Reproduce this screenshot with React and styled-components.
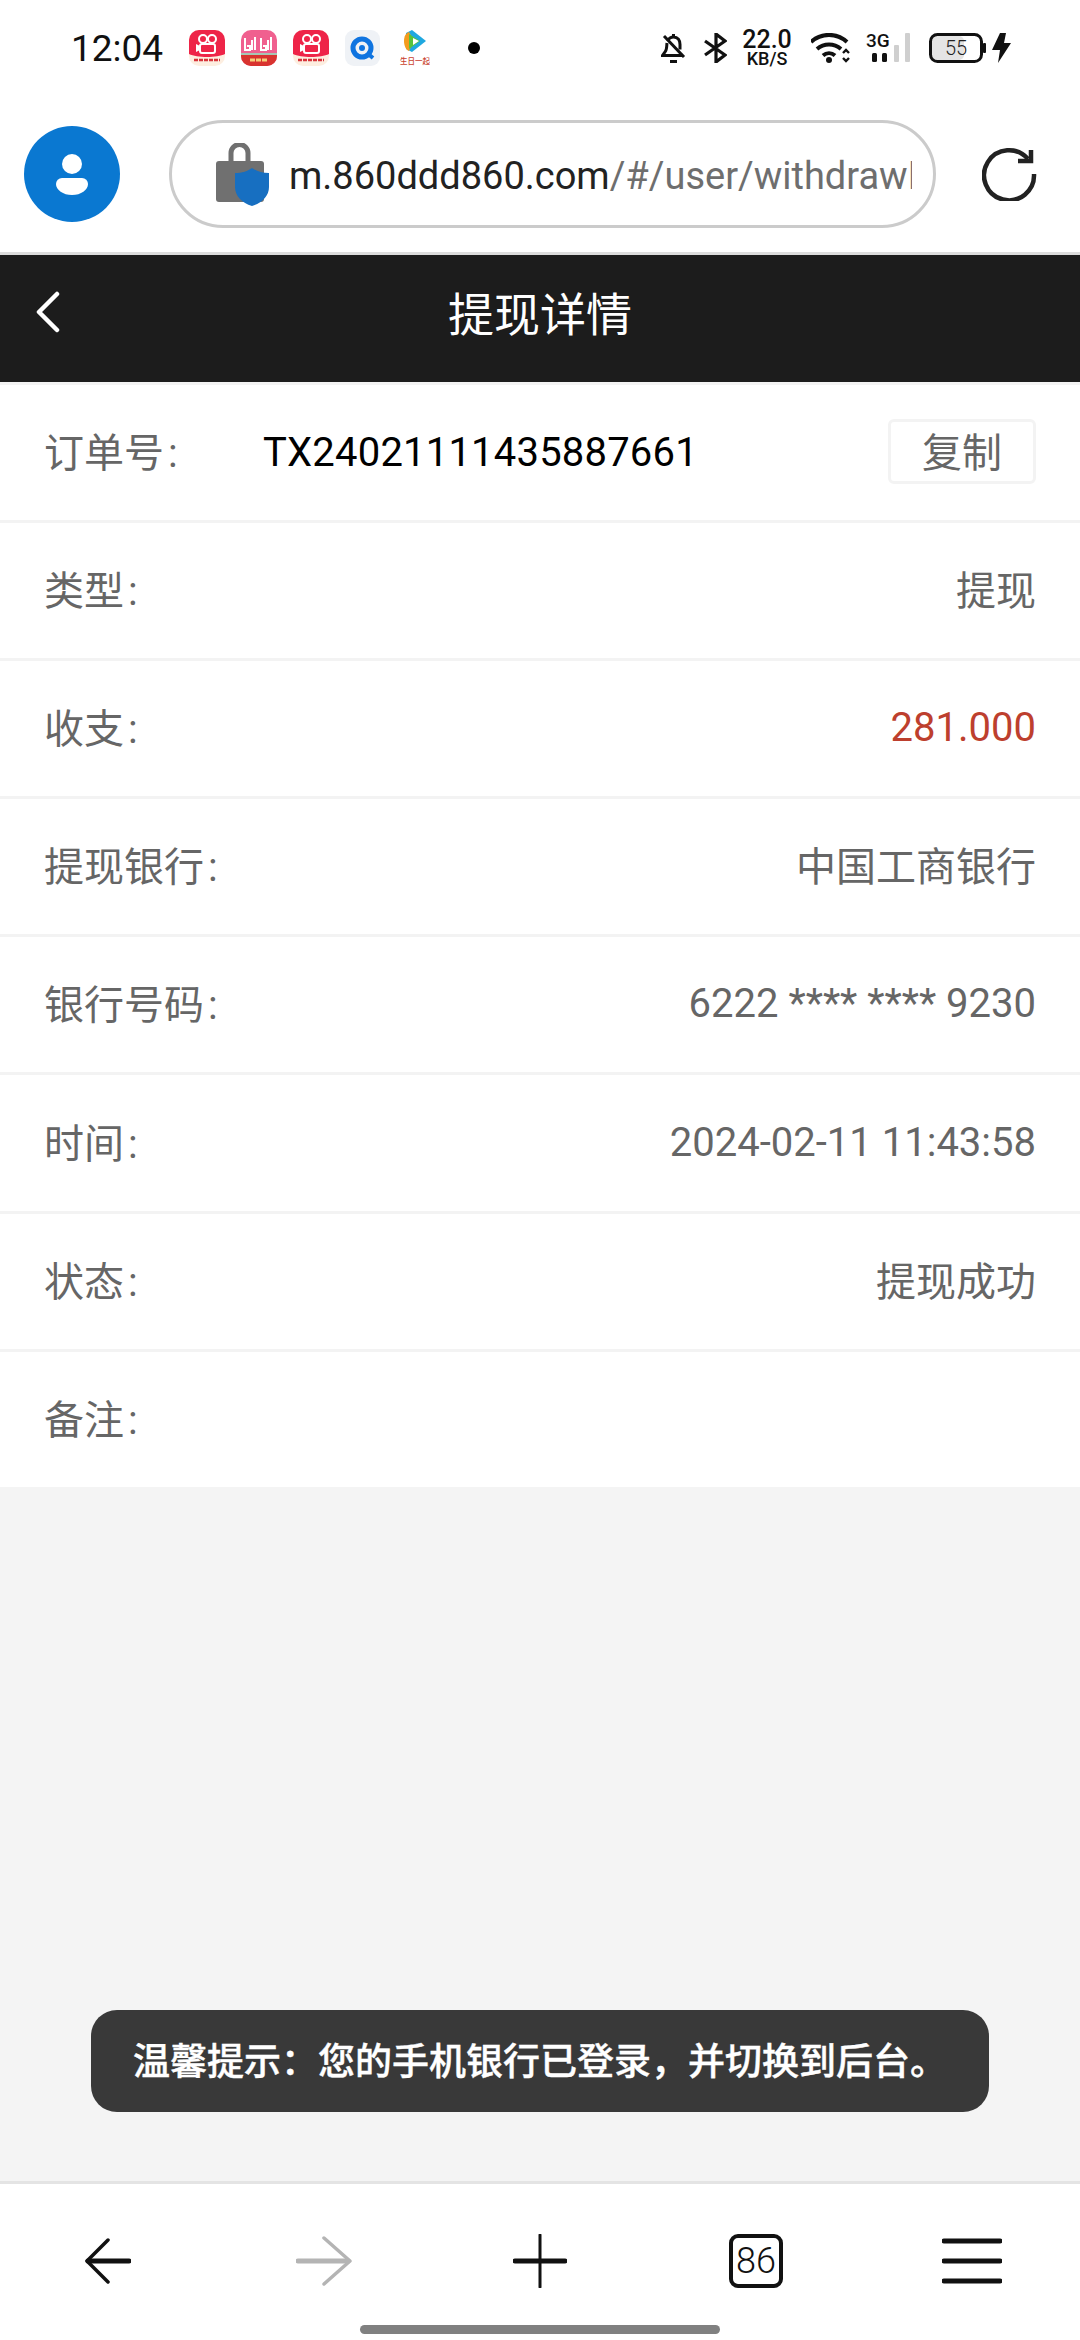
import React from 'react';
import styled, { createGlobalStyle } from 'styled-components';

const GlobalStyle = createGlobalStyle`
  html, body {
    margin: 0;
    padding: 0;
    background: #f4f4f4;
  }
  * {
    box-sizing: border-box;
  }
`;

const Page = styled.div`
  width: 1080px;
  height: 2340px;
  display: flex;
  flex-direction: column;
  overflow: hidden;
  background: #f4f4f4;
  font-family: Roboto, "Noto Sans CJK SC", sans-serif;
`;

const StatusBar = styled.div`
  height: 96px;
  flex: none;
  display: flex;
  align-items: center;
  padding: 0 69px 0 71px;
  background: #fff;
`;

const Clock = styled.div`
  width: 118px;
  font-size: 37px;
  font-weight: 400;
  color: #111;
`;

const AppIcons = styled.div`
  display: flex;
  align-items: center;
  gap: 16px;
`;

const Dot = styled.span`
  width: 12px;
  height: 12px;
  margin-left: 38px;
  border-radius: 50%;
  background: #000;
`;

const StatusRight = styled.div`
  margin-left: auto;
  display: flex;
  align-items: center;
`;

const StatusItem = styled.div`
  display: flex;
  margin-left: ${(p) => p.$gap || 0}px;
`;

const Speed = styled.div`
  width: 48px;
  margin-left: 16px;
  display: flex;
  flex-direction: column;
  align-items: center;
  color: #111;
  font-weight: 500;
  line-height: 1;
`;

const SpeedValue = styled.span`
  font-size: 25px;
  height: 21px;
  line-height: 19px;
`;

const SpeedUnit = styled.span`
  font-size: 18px;
  height: 16px;
  line-height: 16px;
`;

const BrowserBar = styled.div`
  height: 159px;
  flex: none;
  display: flex;
  align-items: center;
  padding: 0 44px 0 24px;
  background: #fff;
  border-bottom: 3px solid #dcdcdc;
`;

const Avatar = styled.div`
  width: 96px;
  height: 96px;
  flex: none;
  display: flex;
  align-items: center;
  justify-content: center;
  border-radius: 50%;
  background: #0a78d1;
`;

const AddressBar = styled.div`
  width: 767px;
  height: 108px;
  margin-left: 49px;
  flex: none;
  display: flex;
  align-items: center;
  gap: 20px;
  padding: 0 21px 0 44px;
  border: 3px solid #cbcbcb;
  border-radius: 54px;
`;

const Url = styled.div`
  flex: 1;
  min-width: 0;
  overflow: hidden;
  white-space: nowrap;
  padding-top: 4px;
  font-size: 38px;
  color: #6e6e6e;
`;

const UrlHost = styled.span`
  color: #222;
`;

const Reload = styled.div`
  margin-left: 46px;
  display: flex;
`;

const TitleBar = styled.div`
  height: 127px;
  flex: none;
  display: flex;
  align-items: center;
  justify-content: center;
  position: relative;
  padding-bottom: 15px;
  background: #1c1c1c;
  color: #fff;
  font-size: 46px;
`;

const BackButton = styled.div`
  position: absolute;
  left: 36px;
  top: 36px;
  display: flex;
`;

const List = styled.div`
  flex: none;
  background: #fff;
`;

const Row = styled.div`
  height: 138.1px;
  display: flex;
  align-items: center;
  justify-content: space-between;
  padding: 0 44px;
  border-top: 3px solid #f3f3f3;
  font-size: 40px;
  color: #666;
`;

const OrderNumber = styled.span`
  flex: 1;
  margin-left: 85px;
  color: #000;
  letter-spacing: 0.2px;
`;

const Label = styled.span`
  min-width: 134px;
  padding-bottom: 5px;
`;

const Colon = styled.span`
  margin-left: 4px;
`;

const Value = styled.span`
  padding-bottom: ${(p) => (p.$cjk ? 5 : 2)}px;
  color: ${(p) => p.$color || '#666'};
`;

const CopyButton = styled.div`
  width: 148px;
  height: 65px;
  margin-bottom: 2px;
  display: flex;
  align-items: center;
  justify-content: center;
  padding-bottom: 4px;
  border: 3px solid #f3f3f3;
  border-radius: 6px;
`;

const Content = styled.div`
  flex: 1;
  position: relative;
`;

const Toast = styled.div`
  position: absolute;
  left: 91px;
  top: 523px;
  width: 898px;
  height: 102px;
  display: flex;
  align-items: center;
  padding: 0 0 4px 42px;
  border-radius: 26px;
  background: #393939;
  color: #fff;
  font-size: 37px;
  font-weight: 500;
  -webkit-text-stroke: 0.4px #fff;
  white-space: nowrap;
`;

const BottomBar = styled.div`
  height: 159px;
  flex: none;
  display: flex;
  flex-direction: column;
  align-items: center;
  padding-top: 47px;
  background: #fff;
  border-top: 3px solid #e4e4e4;
`;

const NavRow = styled.div`
  width: 100%;
  height: 60px;
  display: grid;
  grid-template-columns: repeat(5, 1fr);
`;

const NavCell = styled.div`
  display: flex;
  align-items: center;
  justify-content: center;
`;

const TabCount = styled.div`
  width: 54px;
  height: 54px;
  display: flex;
  align-items: center;
  justify-content: center;
  border: 4px solid #111;
  border-radius: 9px;
  color: #111;
  font-size: 36px;
  font-weight: 300;
`;

const HomeIndicator = styled.div`
  width: 360px;
  height: 9px;
  margin-top: 34px;
  border-radius: 5px;
  background: #808080;
`;

const KuaishouIcon = () => (
  <svg width="36" height="36" viewBox="0 0 36 36">
    <rect width="36" height="36" rx="10" fill="#fdeee0" />
    <path d="M0 10a10 10 0 0 1 10-10h16a10 10 0 0 1 10 10v14c-8 4-28 4-36 0z" fill="#ee2448" />
    <circle cx="14" cy="9" r="4" fill="none" stroke="#fff" strokeWidth="2" />
    <circle cx="23" cy="9" r="4" fill="none" stroke="#fff" strokeWidth="2" />
    <rect x="11" y="14" width="15" height="9" rx="2" fill="none" stroke="#fff" strokeWidth="2" />
    <path d="M11 16l-4-2v8l4-2z" fill="#fff" />
    <path d="M5 30h26" stroke="#d8333a" strokeWidth="2.500" strokeDasharray="4 1" />
  </svg>
);

const BiliIcon = () => (
  <svg width="36" height="36" viewBox="0 0 36 36">
    <rect width="36" height="36" rx="10" fill="#f0608f" />
    <path d="M0 25h36v1a10 10 0 0 1-10 10H10A10 10 0 0 1 0 26z" fill="#d8332f" />
    <rect y="23" width="36" height="2" fill="#a6c6b4" />
    <path d="M4 8v12h5v-4H6M11 10v10M14 7v13M20 8v12h5v-4h-3M27 10v10M30 7v13" fill="none" stroke="#fff" strokeWidth="2" />
    <path d="M9 30h18" stroke="#f6cf7a" strokeWidth="3" strokeDasharray="5 1" />
  </svg>
);

const QqIcon = () => (
  <svg width="35" height="36" viewBox="0 0 35 36">
    <rect width="35" height="36" rx="9" fill="#eff2f6" />
    <circle cx="17" cy="18" r="9" fill="none" stroke="#0f74e0" strokeWidth="5" />
    <circle cx="17" cy="18" r="3" fill="#0f74e0" />
    <path d="M22 23l6 5" stroke="#0f74e0" strokeWidth="4" />
  </svg>
);

const TencentVideoIcon = () => (
  <svg width="34" height="36" viewBox="-4 0 34 36">
    <path d="M6 3l6-3 14 11-14 11-6-3z" fill="#1fa8e0" />
    <path d="M9 2l5 9-5 10c-3-1-5-5-5-10s2-8 5-9z" fill="#f39b1d" />
    <path d="M9 4l11 7-11 8z" fill="#57c33c" />
    <path d="M13 8l6 3-6 4z" fill="#fff" />
    <text x="0" y="34" fontFamily="'Noto Sans CJK SC'" fontSize="7.500" fontWeight="500" fill="#c9432f">生日一起</text>
  </svg>
);

const BellOff = () => (
  <svg width="25" height="30" viewBox="0 0 25 30" fill="none" stroke="#111" strokeWidth="3">
    <path d="M12.500 1v3M6.500 8c1.500-3 3.500-4 6-4 4.500 0 6.500 3.500 6.500 7.500v5" />
    <path d="M6 10c-.5 4 0 7-2 9l-2.500 3.500H22" />
    <path d="M3 3l20 21" />
    <path d="M9 28.500h7" />
  </svg>
);

const Bluetooth = () => (
  <svg width="23" height="30" viewBox="0 0 23 30" fill="none" stroke="#111" strokeWidth="3.200">
    <path d="M1 8l20 14-9 7V1l9 7L1 22" />
  </svg>
);

const Wifi = () => (
  <svg width="39" height="30" viewBox="0 0 39 30" fill="none" stroke="#111" strokeWidth="4">
    <path d="M0 9c10-9.500 26-9.500 36 0" />
    <path d="M6 16c7-6 17-6 24 0" />
    <path d="M12 22.500c3.500-3 8.500-3 12 0" />
    <circle cx="18" cy="27" r="3" fill="#111" stroke="none" />
    <path d="M32 20l3-3 3 3M32 25l3 3 3-3" strokeWidth="2.400" />
  </svg>
);

const Signal = () => (
  <svg width="44" height="30" viewBox="0 0 44 30">
    <text x="0" y="14" fontFamily="Roboto" fontSize="19" fontWeight="500" fill="#111">3G</text>
    <rect x="6" y="20" width="5" height="9" rx="1.500" fill="#111" />
    <rect x="16" y="20" width="5" height="9" rx="1.500" fill="#111" />
    <rect x="28" y="12" width="5" height="17" rx="1" fill="#cfcfcf" />
    <rect x="39" y="0" width="5" height="29" rx="1" fill="#cfcfcf" />
  </svg>
);

const Battery = () => (
  <svg width="57" height="30" viewBox="0 0 57 30">
    <rect x="3" y="3" width="32" height="24" rx="5" fill="#e4e4e4" />
    <rect x="1.500" y="1.500" width="51" height="27" rx="7" fill="none" stroke="#111" strokeWidth="3" />
    <rect x="54" y="10" width="3" height="10" rx="1" fill="#111" />
    <text x="27" y="22" textAnchor="middle" fontFamily="Roboto" fontSize="20" fontWeight="300" fill="#222">55</text>
  </svg>
);

const Bolt = () => (
  <svg width="19" height="30" viewBox="0 0 19 30">
    <path d="M8 0h6l-2 10h7L6 30l2-13H0z" fill="#111" />
  </svg>
);

const UserGlyph = () => (
  <svg width="32" height="41" viewBox="0 0 32 41">
    <circle cx="16" cy="10" r="10" fill="#fff" />
    <path d="M6 24h20a6 6 0 0 1 6 6c0 6-7 11-16 11S0 36 0 30a6 6 0 0 1 6-6z" fill="#fff" />
  </svg>
);

const SafeLock = () => (
  <svg width="53" height="63" viewBox="0 0 53 63">
    <path d="M15 20V10a8 8 0 0 1 17 0v10" fill="none" stroke="#707070" strokeWidth="5" />
    <rect y="18" width="48" height="41" rx="3" fill="#707070" />
    <path d="M36 25c4 3 10 5 17 5v14c0 9-7 16-17 19-10-3-17-10-17-19V30c7 0 13-2 17-5z" fill="#176fc1" />
  </svg>
);

const ReloadGlyph = () => (
  <svg width="55" height="54" viewBox="0 0 55 54" fill="none" stroke="#222" strokeWidth="4.500">
    <path d="M46 12A25 25 0 1 0 52 27" />
    <path d="M49 3v11H36" />
  </svg>
);

const Chevron = () => (
  <svg width="24" height="42" viewBox="0 0 24 42" fill="none" stroke="#fff" strokeWidth="4.500" strokeLinecap="round" strokeLinejoin="round">
    <path d="M21 3L3 21l18 18" />
  </svg>
);

const BackArrow = () => (
  <svg width="46" height="46" viewBox="0 0 46 46" fill="none" stroke="#111" strokeLinecap="round">
    <path d="M23 2L2 23l21 21" strokeWidth="3.500" strokeLinejoin="round" />
    <path d="M3 23h41" strokeWidth="5" />
  </svg>
);

const ForwardArrow = () => (
  <svg width="56" height="50" viewBox="0 0 56 50" fill="none" stroke="#b4b4b4" strokeLinecap="round">
    <path d="M28 2l26 23-26 23" strokeWidth="3.500" strokeLinejoin="round" />
    <path d="M2 25h50" strokeWidth="5" />
  </svg>
);

const Plus = () => (
  <svg width="54" height="54" viewBox="0 0 54 54" fill="none" stroke="#111" strokeLinecap="round">
    <path d="M27 1v52" strokeWidth="3" />
    <path d="M2 27h50" strokeWidth="5" />
  </svg>
);

const Menu = () => (
  <svg width="60" height="46" viewBox="0 0 60 46" fill="none" stroke="#111" strokeWidth="5" strokeLinecap="round">
    <path d="M2 3h56M2 23h56M2 43h56" />
  </svg>
);

const rows = [
  { label: '类型', value: '提现', cjk: true },
  { label: '收支', value: '281.000', color: '#bd3f2e' },
  { label: '提现银行', value: '中国工商银行', cjk: true },
  { label: '银行号码', value: '6222 **** **** 9230' },
  { label: '时间', value: '2024-02-11 11:43:58' },
  { label: '状态', value: '提现成功', cjk: true },
  { label: '备注', value: '' },
];

const toastText = '温馨提示\uFF1A您的手机银行已登录\uFF0C并切换到后台。';

export default function App() {
  return (
    <Page>
      <GlobalStyle />
      <StatusBar>
        <Clock>12:04</Clock>
        <AppIcons>
          <KuaishouIcon />
          <BiliIcon />
          <KuaishouIcon />
          <QqIcon />
          <TencentVideoIcon />
        </AppIcons>
        <Dot />
        <StatusRight>
          <BellOff />
          <StatusItem $gap={18}><Bluetooth /></StatusItem>
          <Speed>
            <SpeedValue>22.0</SpeedValue>
            <SpeedUnit>KB/S</SpeedUnit>
          </Speed>
          <StatusItem $gap={20}><Wifi /></StatusItem>
          <StatusItem $gap={16}><Signal /></StatusItem>
          <StatusItem $gap={19}><Battery /></StatusItem>
          <StatusItem $gap={6}><Bolt /></StatusItem>
        </StatusRight>
      </StatusBar>

      <BrowserBar>
        <Avatar><UserGlyph /></Avatar>
        <AddressBar>
          <SafeLock />
          <Url><UrlHost>m.860ddd860.com</UrlHost>/#/user/withdrawRecord</Url>
        </AddressBar>
        <Reload><ReloadGlyph /></Reload>
      </BrowserBar>

      <TitleBar>
        <BackButton><Chevron /></BackButton>
        提现详情
      </TitleBar>

      <List>
        <Row>
          <Label>订单号<Colon>:</Colon></Label>
          <OrderNumber>TX24021111435887661</OrderNumber>
          <CopyButton>复制</CopyButton>
        </Row>
        {rows.map((row) => (
          <Row key={row.label}>
            <Label>{row.label}<Colon>:</Colon></Label>
            <Value $color={row.color} $cjk={row.cjk}>{row.value}</Value>
          </Row>
        ))}
      </List>

      <Content>
        <Toast>{toastText}</Toast>
      </Content>

      <BottomBar>
        <NavRow>
          <NavCell><BackArrow /></NavCell>
          <NavCell><ForwardArrow /></NavCell>
          <NavCell><Plus /></NavCell>
          <NavCell><TabCount>86</TabCount></NavCell>
          <NavCell><Menu /></NavCell>
        </NavRow>
        <HomeIndicator />
      </BottomBar>
    </Page>
  );
}
